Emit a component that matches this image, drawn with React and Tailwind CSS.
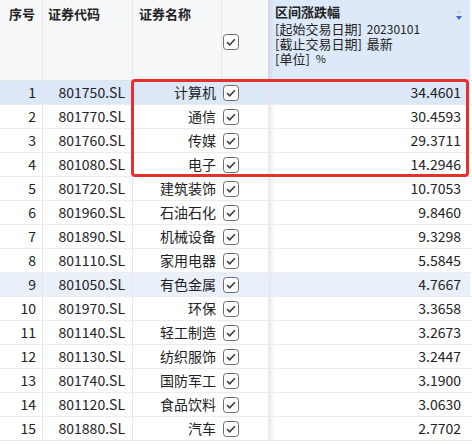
import React from 'react';

const rows = [
  ['1', '801750.SL', '计算机', '34.4601'],
  ['2', '801770.SL', '通信', '30.4593'],
  ['3', '801760.SL', '传媒', '29.3711'],
  ['4', '801080.SL', '电子', '14.2946'],
  ['5', '801720.SL', '建筑装饰', '10.7053'],
  ['6', '801960.SL', '石油石化', '9.8460'],
  ['7', '801890.SL', '机械设备', '9.3298'],
  ['8', '801110.SL', '家用电器', '5.5845'],
  ['9', '801050.SL', '有色金属', '4.7667'],
  ['10', '801970.SL', '环保', '3.3658'],
  ['11', '801140.SL', '轻工制造', '3.2673'],
  ['12', '801130.SL', '纺织服饰', '3.2447'],
  ['13', '801740.SL', '国防军工', '3.1900'],
  ['14', '801120.SL', '食品饮料', '3.0630'],
  ['15', '801880.SL', '汽车', '2.7702'],
];

const font = { fontFamily: '"Noto Sans CJK SC", "Noto Sans", sans-serif' };

const Check = () => (
  <svg width="16" height="16" viewBox="0 0 16 16" className="block">
    <rect x="0.5" y="0.5" width="15" height="15" rx="3" fill="white" stroke="#6b6b6b" />
    <path d="M4 8.2 L6.7 10.8 L11.9 5.3" fill="none" stroke="#3d3d3d" strokeWidth="1.6" />
  </svg>
);

const rowBg = (i) => {
  if (i === 0) return 'bg-[#dce7f8]';
  if (i === 8) return 'bg-[#eaf0fa]';
  return 'bg-white';
};

export default function App() {
  return (
    <div className="relative w-[472px] h-[444px] overflow-hidden bg-white text-[#222]" style={font}>
      {/* Header */}
      <div className="flex h-[81px] border-b border-[#e3e3e3]">
        <div className="w-[43px] shrink-0 bg-[#f7f8fa] border-r border-[#e6e6e6] pl-[9px] pt-[4px] text-[13px] font-bold">序号</div>
        <div className="w-[90px] shrink-0 bg-[#f7f8fa] border-r border-[#e6e6e6] pl-[5px] pt-[4px] text-[13px] font-bold">证券代码</div>
        <div className="w-[89px] shrink-0 bg-[#f7f8fa] border-r border-[#e6e6e6] pl-[6px] pt-[4px] text-[13px] font-bold">证券名称</div>
        <div className="w-[46px] shrink-0 bg-[#f7f8fa] flex items-start pt-[34px] pl-[1px]">
          <Check />
        </div>
        <div className="relative w-[202px] shrink-0 bg-[#dde8f8] pl-[7px] pt-[3px] text-[13px] leading-[15px]">
          <div className="absolute left-0 top-0 bottom-0 w-[6px] bg-gradient-to-r from-[#d3d9ea] to-transparent" />
          <div className="font-bold leading-[18px]">区间涨跌幅</div>
          <div className="flex h-[15px] items-center"><span>[起始交易日期]</span><span className="ml-[5px] text-[12px]">20230101</span></div>
          <div className="flex h-[15px] items-center"><span>[截止交易日期]</span><span className="ml-[5px]">最新</span></div>
          <div className="flex h-[15px] items-center"><span>[单位]</span><span className="ml-[6px] text-[11px]">%</span></div>
          <svg width="8" height="14" viewBox="0 0 8 14" className="absolute right-[7px] top-[8px]">
            <path d="M4 1 L7 5 L1 5 Z" fill="#c9d3e6" />
            <path d="M1 8 L7 8 L4 12 Z" fill="#3a6cd1" />
          </svg>
        </div>
        <div className="flex-1 bg-white" />
      </div>

      {/* Body */}
      {rows.map((r, i) => (
        <div key={r[0]} className={`flex h-[24px] border-b border-[#ececec] text-[14px] leading-[23px] ${rowBg(i)}`}>
          <div className="w-[43px] shrink-0 border-r border-[#e6e6e6] text-right pr-[6px]">{r[0]}</div>
          <div className="w-[90px] shrink-0 border-r border-[#e6e6e6] text-right pr-[7px]">{r[1]}</div>
          <div className="w-[89px] shrink-0 text-right pr-[6px]">{r[2]}</div>
          <div className="w-[46px] shrink-0 flex items-center pl-[1px]">
            <Check />
          </div>
          <div className="relative w-[202px] shrink-0 text-right pr-[9px]">
            <div className="absolute left-0 top-0 bottom-0 w-[7px] bg-gradient-to-r from-[#e6e7f1] to-transparent" />
            {r[3]}
          </div>
          <div className="flex-1 bg-white" />
        </div>
      ))}

      {/* Highlight annotation */}
      <div className="absolute left-[131px] top-[79px] w-[338px] h-[98px] border-[3px] border-[#e5302d] rounded-[4px] pointer-events-none" />
    </div>
  );
}
